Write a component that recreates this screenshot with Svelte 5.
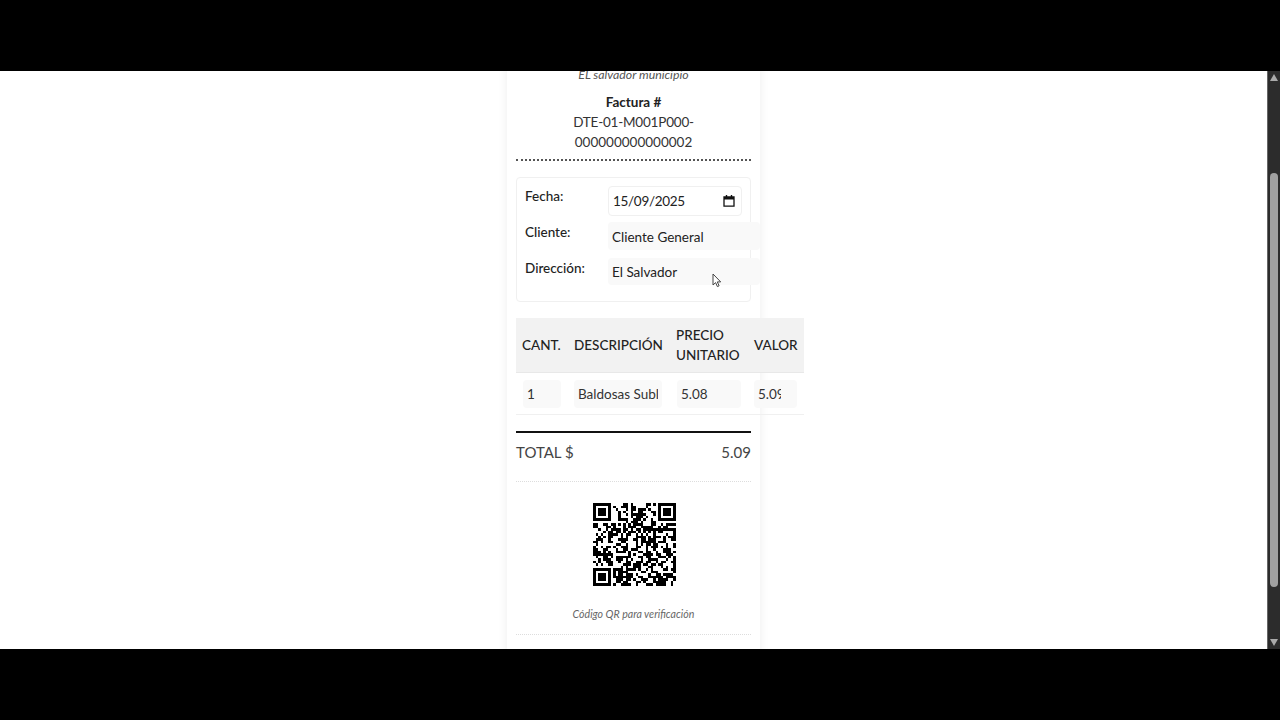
<script>
  const size = 33;
  let seed = 20250915;
  const rnd = () => {
    seed = (seed * 1664525 + 1013904223) >>> 0;
    return (seed >>> 16) & 1;
  };
  const finders = [[0, 0], [26, 0], [0, 26]];
  const inFinder = (x, y) => finders.some(([fx, fy]) => x >= fx - 1 && x < fx + 8 && y >= fy - 1 && y < fy + 8);
  const finderCell = (x, y) => {
    for (const [fx, fy] of finders) {
      const dx = x - fx, dy = y - fy;
      if (dx >= 0 && dx < 7 && dy >= 0 && dy < 7) {
        return dx === 0 || dx === 6 || dy === 0 || dy === 6 || (dx >= 2 && dx <= 4 && dy >= 2 && dy <= 4);
      }
    }
    return false;
  };
  let qrPath = '';
  for (let y = 0; y < size; y++) {
    for (let x = 0; x < size; x++) {
      const on = inFinder(x, y) ? finderCell(x, y) : rnd() === 1;
      if (on) qrPath += `M${x} ${y}h1v1h-1z`;
    }
  }
</script>

<div class="screen">
  <div class="band"></div>
  <div class="view">
    <main class="page">
      <article class="receipt">
        <p class="place">EL salvador municipio</p>
        <h2>Factura #</h2>
        <p class="number"><span class="tight">DTE-01-M001P000-</span><br />000000000000002</p>
        <div class="rule-dark"></div>

        <section class="fields">
          <div class="field">
            <span class="label">Fecha:</span>
            <div class="date">
              <span>15/09/2025</span>
              <svg viewBox="0 0 12 12" width="12" height="12" aria-hidden="true">
                <path d="M1 1.8h10v9.4H1z" fill="none" stroke="#111" stroke-width="1.3" />
                <path d="M1 2h10v2.6H1zM2.8 0h1.4v2H2.8zM7.8 0h1.4v2H7.8z" fill="#111" />
              </svg>
            </div>
          </div>
          <div class="field">
            <span class="label">Cliente:</span>
            <input class="text" value="Cliente General" readonly />
          </div>
          <div class="field">
            <span class="label">Dirección:</span>
            <input class="text short" value="El Salvador" readonly />
          </div>
        </section>

        <div class="table-holder">
          <table>
            <colgroup>
              <col class="c1" /><col class="c2" /><col class="c3" /><col class="c4" />
            </colgroup>
            <thead>
              <tr>
                <th>CANT.</th>
                <th>DESCRIPCIÓN</th>
                <th>PRECIO UNITARIO</th>
                <th>VALOR</th>
              </tr>
            </thead>
            <tbody>
              <tr>
                <td class="shift"><input type="number" value="1" readonly /></td>
                <td><input value="Baldosas Sublimadas" readonly /></td>
                <td class="shift"><input type="number" value="5.08" readonly /></td>
                <td class="last"><input type="number" value="5.09" readonly /></td>
              </tr>
            </tbody>
          </table>
        </div>

        <div class="total">
          <span>TOTAL $</span>
          <span>5.09</span>
        </div>

        <div class="qr">
          <svg viewBox="0 0 33 33" width="83" height="83" shape-rendering="crispEdges" aria-label="QR">
            <path d={qrPath} fill="#000" />
          </svg>
          <p>Código QR para verificación</p>
        </div>
        <div class="rule-light"></div>
      </article>
    </main>

    <div class="scrollbar">
      <span class="arrow up"></span>
      <div class="track"><div class="thumb"></div></div>
      <span class="arrow down"></span>
    </div>

    <svg class="cursor" viewBox="0 0 10 15" width="10" height="15" aria-hidden="true">
      <path d="M1 1v11l2.6-2.4 1.8 4 1.7-.8-1.8-3.9h3.4z" fill="#fff" stroke="#444" stroke-width="1" />
    </svg>
  </div>
  <div class="band"></div>
</div>

<style>
  :global(body) {
    margin: 0;
    background: #000;
  }
  .screen {
    display: flex;
    flex-direction: column;
    height: 720px;
    font-family: Lato, "Open Sans", sans-serif;
    color: #333;
  }
  .band {
    height: 71px;
    flex: none;
    background: #000;
  }
  .view {
    position: relative;
    flex: 1;
    min-height: 0;
    display: flex;
    background: #fff;
    overflow: hidden;
  }
  .page {
    flex: 1;
    display: flex;
    justify-content: center;
    overflow: hidden;
  }
  .receipt {
    width: 235px;
    padding: 0 9px;
    margin-top: -7px;
    flex: none;
    box-shadow: 0 0 10px rgba(0, 0, 0, 0.07);
    height: 700px;
    text-align: center;
  }
  p, h2 {
    margin: 0;
  }
  .place {
    font-size: 12.3px;
    font-style: italic;
    line-height: 22px;
    color: #555;
  }
  h2 {
    margin-top: 5px;
    font-size: 13.5px;
    font-weight: 700;
    line-height: 22px;
    color: #222;
  }
  .number {
    margin-top: -1px;
    font-size: 13.5px;
    line-height: 20px;
    color: #333;
  }
  .tight {
    letter-spacing: -0.2px;
  }
  .rule-dark {
    margin-top: 7px;
    border-top: 2px dotted #555;
  }
  .fields {
    margin-top: 16px;
    height: 115px;
    border: 1px solid #f0f0f0;
    border-radius: 4px;
    padding: 8px 0 0 8px;
    display: flex;
    flex-direction: column;
    gap: 6px;
    text-align: left;
  }
  .field {
    display: flex;
    height: 30px;
    font-size: 13.5px;
  }
  .label {
    width: 83px;
    flex: none;
    font-weight: 500;
    line-height: 20px;
    color: #222;
  }
  .date {
    width: 134px;
    height: 30px;
    box-sizing: border-box;
    display: flex;
    align-items: center;
    justify-content: space-between;
    padding: 0 6px 0 4px;
    border: 1px solid #f0f0f0;
    border-radius: 4px;
    color: #222;
    letter-spacing: -0.3px;
  }
  input {
    font: inherit;
    color: #333;
    border: 0;
    outline: 0;
    margin: 0;
    background: #f9f9f9;
    box-sizing: border-box;
    padding: 0 4px;
    border-radius: 4px;
  }
  .text {
    width: 152px;
    height: 28px;
    padding-top: 1px;
    font-size: 13.5px;
    color: #222;
    flex: none;
  }
  .short {
    height: 27px;
  }
  .table-holder {
    margin-top: 16px;
    width: 288px;
  }
  table {
    width: 288px;
    table-layout: fixed;
    border-collapse: collapse;
    text-align: left;
    font-size: 13.5px;
  }
  .c1 { width: 52px; }
  .c2 { width: 102px; }
  .c3 { width: 78px; }
  .c4 { width: 56px; }
  th {
    height: 54px;
    padding: 0 6px;
    background: #f2f2f2;
    border-bottom: 1px solid #e8e8e8;
    font-weight: 500;
    line-height: 20px;
    color: #222;
  }
  td {
    height: 41px;
    padding: 0 8px 0 6px;
    border-bottom: 1px solid #f0f0f0;
  }
  td.shift {
    padding: 0 7.5px 0 7px;
  }
  td.last {
    padding: 0 7px 0 6px;
  }
  td input {
    width: 100%;
    height: 28px;
    display: block;
    font-size: 13.5px;
  }
  td input[type="number"] {
    padding-right: 1px;
  }
  .total {
    margin-top: 16px;
    padding: 9px 0 0;
    border-top: 2px solid #111;
    display: flex;
    justify-content: space-between;
    font-size: 15px;
    line-height: 20px;
    color: #444;
  }
  .qr {
    margin-top: 19px;
    padding-top: 21px;
    border-top: 1px dotted #ddd;
  }
  .qr svg {
    display: block;
    margin: 0 0 0 77px;
  }
  .qr p {
    margin-top: 21px;
    font-size: 10.6px;
    font-style: italic;
    line-height: 14px;
    color: #666;
  }
  .rule-light {
    margin-top: 13px;
    border-top: 1px dotted #ddd;
  }
  .scrollbar {
    width: 13px;
    flex: none;
    box-sizing: border-box;
    background: #2c2c2c;
    border-left: 1px solid #666;
    display: flex;
    flex-direction: column;
    align-items: center;
  }
  .arrow {
    flex: none;
    width: 0;
    height: 0;
    border-left: 4px solid transparent;
    border-right: 4px solid transparent;
  }
  .up {
    margin-top: 3px;
    border-bottom: 7px solid #aaa;
  }
  .down {
    margin-bottom: 3px;
    border-top: 7px solid #aaa;
  }
  .track {
    flex: 1;
    width: 100%;
    display: flex;
    justify-content: center;
  }
  .thumb {
    width: 8px;
    height: 414px;
    margin-top: 92px;
    background: #a0a0a0;
    border-radius: 4px;
  }
  .cursor {
    position: absolute;
    left: 712px;
    top: 202px;
  }
</style>
